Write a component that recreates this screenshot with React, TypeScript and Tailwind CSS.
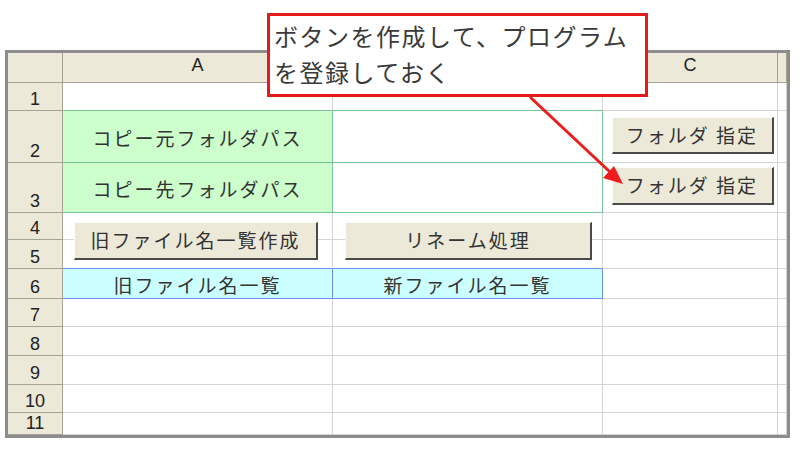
const rows = [1, 2, 3, 4, 5, 6, 7, 8, 9, 10, 11];

const head = "bg-[#ece9d8] border-r border-b border-r-[#a6a293] border-b-[#a6a293]";
const plain = "bg-white border-r border-b border-r-[#d4d4d4] border-b-[#d4d4d4]";
const greenFill = "bg-[#ccffcc] border-r border-b border-r-[#78c49a] border-b-[#78c49a]";
const greenEdge = "bg-white border-r border-b border-r-[#78c49a] border-b-[#78c49a]";
const greenTop = "bg-white border-r border-b border-r-[#d4d4d4] border-b-[#78c49a]";
const blueTop = "bg-white border-r border-b border-r-[#d4d4d4] border-b-[#6f8ff0]";
const blueFill = "bg-[#ccffff] border-r border-b border-r-[#6f8ff0] border-b-[#6f8ff0]";

function cellClass(row: number, col: number) {
  if (col === 1 || col === 2) {
    if (row === 1) return greenTop;
    if (row === 2 || row === 3) return col === 1 ? greenFill : greenEdge;
    if (row === 5) return blueTop;
    if (row === 6) return blueFill;
  }
  return plain;
}

const cellText: Record<string, string> = {
  "2-1": "コピー元フォルダパス",
  "3-1": "コピー先フォルダパス",
  "6-1": "旧ファイル名一覧",
  "6-2": "新ファイル名一覧",
};

const jp = "font-['Noto_Sans_CJK_JP','Liberation_Sans',sans-serif]";
const num = "font-['Liberation_Sans',sans-serif]";
const tracks =
  "grid grid-cols-[55px_270px_270px_175px_9px] grid-rows-[30px_28px_52px_50px_27px_29px_30px_28px_29px_29px_28px_22px]";

const btn = `flex items-center justify-center bg-[#ece9d8] border-t border-l border-r-2 border-b-2 border-t-[#fbfbf7] border-l-[#fbfbf7] border-r-[#4a4a4a] border-b-[#4a4a4a] text-[19px] tracking-[2px] text-[#333] ${jp}`;

function Sheet() {
  return (
    <div className="ml-[5px] mt-[50px] w-[785px] border-[3px] border-[#8c8c8c] grid">
      {/* cells */}
      <div className={`${tracks} col-start-1 row-start-1`}>
        <div className={head} />
        {["A", "B", "C", ""].map((l, i) => (
          <div key={i} className={`${head} ${num} flex items-end justify-center pb-[3px] text-[18px] text-[#222]`}>
            {l}
          </div>
        ))}
        {rows.map((row) => [
          <div
            key={`h${row}`}
            className={`${head} ${num} flex items-end justify-center pb-[1px] text-[18px] leading-[20px] text-[#222] overflow-hidden`}
          >
            {row}
          </div>,
          ...[1, 2, 3, 4].map((col) => (
            <div
              key={`${row}-${col}`}
              className={`${cellClass(row, col)} ${jp} flex items-center justify-center pt-[3px] text-[19px] tracking-[2px] text-[#333] overflow-hidden`}
            >
              {cellText[`${row}-${col}`]}
            </div>
          )),
        ])}
      </div>

      {/* floating buttons, drawn over the cells on the same tracks */}
      <div className={`${tracks} col-start-1 row-start-1 pointer-events-none`}>
        <div className="col-start-4 row-start-3 flex justify-center pt-[6px] pl-[4px]">
          <div className={`${btn} w-[162px] h-[37px]`}>フォルダ 指定</div>
        </div>
        <div className="col-start-4 row-start-4 flex justify-center pt-[4px] pl-[4px]">
          <div className={`${btn} w-[162px] h-[38px]`}>フォルダ 指定</div>
        </div>
        <div className="col-start-2 row-start-5 row-span-2 flex pt-[9px] pl-[11px]">
          <div className={`${btn} w-[244px] h-[38px]`}>旧ファイル名一覧作成</div>
        </div>
        <div className="col-start-3 row-start-5 row-span-2 flex pt-[9px] pl-[12px]">
          <div className={`${btn} w-[247px] h-[38px]`}>リネーム処理</div>
        </div>
      </div>
    </div>
  );
}

export default function App() {
  return (
    <div className="relative w-[800px] h-[450px] bg-white overflow-hidden">
      <Sheet />

      {/* callout */}
      <div
        className={`absolute left-[267px] top-[13px] w-[381px] h-[84px] bg-white border-[3px] border-[#e41b1b] px-[4px] pt-[2px] text-[24px] leading-[36px] tracking-[1.5px] text-[#3a3a3a] ${jp}`}
      >
        <div>ボタンを作成して、プログラム</div>
        <div>を登録しておく</div>
      </div>

      <svg className="absolute left-0 top-0 pointer-events-none" width="800" height="450">
        <line x1="530" y1="97" x2="610" y2="172" stroke="#ee1c1c" strokeWidth="3" />
        <polygon points="623,184 603,178 614,166" fill="#ee1c1c" />
      </svg>
    </div>
  );
}
